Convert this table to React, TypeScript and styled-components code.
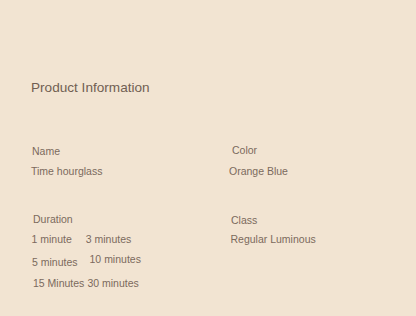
import * as React from 'react';
import styled, { createGlobalStyle } from 'styled-components';

const GlobalStyle = createGlobalStyle`
    html, body {
        margin: 0;
        padding: 0;
        background-color: #f2e4d2;
    }
    body {
        font-family: 'Liberation Sans', Arial, sans-serif;
    }
`

const durations = [
    { items: ['1 minute', '3 minutes'], gap: 14, indent: 0.5, top: 0, lift: 0 },
    { items: ['5 minutes', '10 minutes'], gap: 12, indent: 1, top: 11, lift: 3 },
    { items: ['15 Minutes', '30 minutes'], gap: 3, indent: 2, top: 9, lift: 0 },
];

const App = () => {
    return (
        <>
            <GlobalStyle />
            <Container>
                <Title>Product Information</Title>
                <Grid>
                    <Field>
                        <Label $indent={1} $shift={0}>Name</Label>
                        <Value $indent={0}>Time hourglass</Value>
                    </Field>
                    <Field>
                        <Label $indent={3} $shift={-1}>Color</Label>
                        <Value $indent={0}>Orange Blue</Value>
                    </Field>
                    <Field>
                        <Label $indent={2} $shift={0}>Duration</Label>
                        <Options>
                            {durations.map((row, i) => (
                                <OptionRow key={i} $gap={row.gap} $indent={row.indent} $top={row.top}>
                                    {row.items.map((item, j) => (
                                        <Option key={item} $lift={j === 1 ? row.lift : 0}>{item}</Option>
                                    ))}
                                </OptionRow>
                            ))}
                        </Options>
                    </Field>
                    <Field>
                        <Label $indent={2} $shift={1}>Class</Label>
                        <Value $indent={1.5}>Regular Luminous</Value>
                    </Field>
                </Grid>
            </Container>
        </>
    )
}

const Container = styled.div`
    width: 416px;
    height: 316px;
    box-sizing: border-box;
    padding: 80px 0 0 31px;
    color: #7b6a5d;
    overflow: hidden;
`
const Title = styled.h1`
    margin: 0;
    font-size: 13.6px;
    line-height: 16px;
    font-weight: 400;
    color: #715f52;
`
const Grid = styled.div`
    margin-top: 49px;
    display: grid;
    grid-template-columns: 198px 1fr;
    row-gap: 36px;
`
const Field = styled.div`
    display: flex;
    flex-direction: column;
    gap: 8px;
`
const Label = styled.div<{ $indent: number; $shift: number }>`
    font-size: 10.5px;
    line-height: 12px;
    margin-left: ${p => p.$indent}px;
    transform: translateY(${p => p.$shift}px);
`
const Value = styled.div<{ $indent: number }>`
    font-size: 10.5px;
    line-height: 12px;
    margin-left: ${p => p.$indent}px;
`
const Options = styled.div`
    display: flex;
    flex-direction: column;
`
const OptionRow = styled.div<{ $gap: number; $indent: number; $top: number }>`
    display: flex;
    gap: ${p => p.$gap}px;
    margin-left: ${p => p.$indent}px;
    margin-top: ${p => p.$top}px;
`
const Option = styled.span<{ $lift: number }>`
    font-size: 10.5px;
    line-height: 12px;
    transform: translateY(-${p => p.$lift}px);
`

export default App;
